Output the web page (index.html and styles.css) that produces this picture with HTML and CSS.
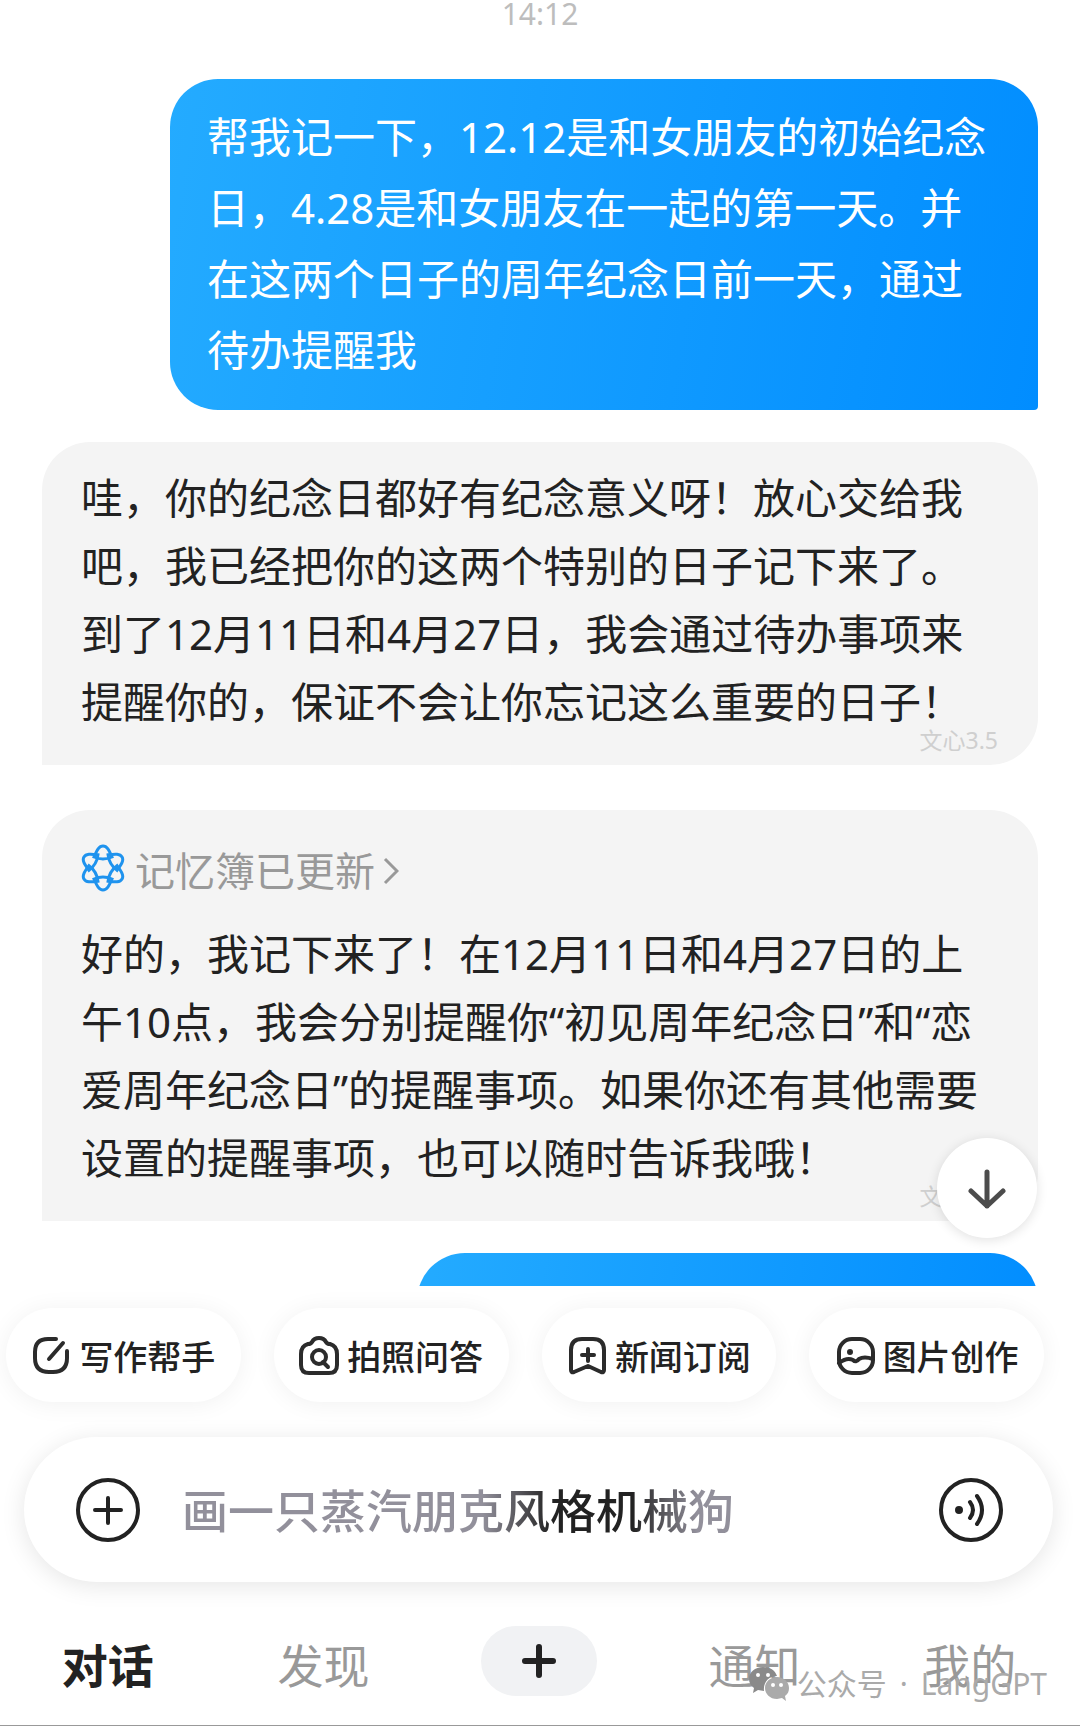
FILE: index.html
```html
<!DOCTYPE html>
<html lang="zh-CN">
<head>
    <meta charset="UTF-8">
    <meta name="viewport" content="width=device-width, initial-scale=1.0">
    <title>对话</title>
    <link rel="stylesheet" href="styles.css">
</head>
<body>
    <div class="app">
        <main class="chat">
            <div class="time">14:12</div>

            <div class="bubble mine">帮我记一下，12.12是和女朋友的初始纪念日，4.28是和女朋友在一起的第一天。并在这两个日子的周年纪念日前一天，通过待办提醒我</div>

            <div class="bubble bot">
                <p>哇，你的纪念日都好有纪念意义呀！放心交给我吧，我已经把你的这两个特别的日子记下来了。到了12月11日和4月27日，我会通过待办事项来提醒你的，保证不会让你忘记这么重要的日子！</p>
                <span class="model">文心3.5</span>
            </div>

            <div class="bubble bot memory">
                <a class="memory-link" href="#">
                    <svg class="flower" viewBox="0 0 44 48" fill="none" stroke="#1f93ee" stroke-width="3">
                        <path id="petal" d="M13 13C16 6 18 2 22 2s6 4 9 11Q22 17 13 13z"/>
                        <use href="#petal" transform="rotate(60 22 24)"/>
                        <use href="#petal" transform="rotate(120 22 24)"/>
                        <use href="#petal" transform="rotate(180 22 24)"/>
                        <use href="#petal" transform="rotate(240 22 24)"/>
                        <use href="#petal" transform="rotate(300 22 24)"/>
                    </svg>
                    <span>记忆簿已更新</span>
                    <svg class="chevron" viewBox="0 0 16 28" fill="none" stroke="#999" stroke-width="3"><path d="M2 2l12 12L2 26"/></svg>
                </a>
                <p>好的，我记下来了！在12月11日和4月27日的上午10点，我会分别提醒你“初见周年纪念日”和“恋爱周年纪念日”的提醒事项。如果你还有其他需要设置的提醒事项，也可以随时告诉我哦！</p>
                <span class="model">文心3.5</span>
            </div>

            <div class="bubble mine next"></div>

            <button class="to-bottom" aria-label="回到底部">
                <svg viewBox="0 0 40 42" fill="none" stroke="#4c4c4c" stroke-width="5" stroke-linecap="round" stroke-linejoin="round"><path d="M20 5v34M4 24l16 15 16-15"/></svg>
            </button>
        </main>

        <footer class="footer">
            <div class="chips">
                <button class="chip">
                    <svg viewBox="0 0 40 40"><path d="M25 4H17Q4 4 4 17v6Q4 37 18 37h4Q36 37 36 23V16M18 24L32 8"/></svg>
                    写作帮手
                </button>
                <button class="chip">
                    <svg viewBox="0 0 40 40"><path d="M13 7Q15 3 20 3t7 4q1 2 4 2 7 2 7 10v11q0 8-8 8H10q-8 0-8-8V19Q2 11 9 9q3 0 4-2z"/><circle cx="20" cy="22" r="7"/><path d="M24 27l5 5"/></svg>
                    拍照问答
                </button>
                <button class="chip">
                    <svg viewBox="0 0 40 40"><path d="M4 35V15Q4 4 15 4h11Q37 4 37 15v20q0 3-3 2l-13-6-14 6q-3 1-3-2zM21 14v12M15 20h12"/></svg>
                    新闻订阅
                </button>
                <button class="chip">
                    <svg viewBox="0 0 40 40"><rect x="4" y="4" width="34" height="34" rx="13"/><path d="M4 28q8-6 14-3 3 3 6-1 5-3 14 0"/><circle class="dot" cx="15" cy="17" r="2"/></svg>
                    图片创作
                </button>
            </div>

            <div class="input-bar">
                <button class="icon-btn" aria-label="更多">
                    <svg viewBox="0 0 66 66"><circle cx="33" cy="33" r="30"/><path d="M33 21v25M20 33h26"/></svg>
                </button>
                <input class="message" type="text" aria-label="输入消息" placeholder="画一只蒸汽朋克风格机械狗">
                <button class="icon-btn" aria-label="语音">
                    <svg viewBox="0 0 66 66"><circle cx="33" cy="33" r="30"/><circle class="dot" cx="21" cy="33" r="3"/><path d="M32 25q6 8 0 16M39 19q10 14 0 28"/></svg>
                </button>
            </div>

            <nav class="tabs">
                <a class="tab active" href="#">对话</a>
                <a class="tab" href="#">发现</a>
                <button class="add" aria-label="新建">
                    <svg viewBox="0 0 36 36"><path d="M18 4v28M4 18h28"/></svg>
                </button>
                <a class="tab" href="#">通知</a>
                <a class="tab" href="#">我的</a>
            </nav>
        </footer>

        <div class="watermark">
            <svg viewBox="0 0 40 34"><path fill="#8a8a8a" d="M14 0C6 0 0 5 0 12c0 4 2 7 5 9l-1 5 5-3 6 1C14 15 20 9 28 9 26 3 21 0 14 0z"/><path fill="#aaa" d="M28 10c-7 0-12 5-12 11s5 11 12 11l5-1 4 3-1-5c3-2 4-5 4-8 0-6-5-11-12-11z"/><g fill="#fff"><circle cx="9" cy="8" r="2"/><circle cx="19" cy="8" r="2"/><circle cx="24" cy="18" r="2"/><circle cx="32" cy="18" r="2"/></g></svg>
            <span>公众号</span><span class="sep">·</span><span>LangGPT</span>
        </div>
    </div>
</body>
</html>
```
FILE: styles.css
```css
* {
    box-sizing: border-box;
}
body {
    margin: 0;
    background: #fff;
    color: #222;
    font-family: "Noto Sans", "Noto Sans CJK SC", sans-serif;
}
button {
    border: none;
    padding: 0;
    font-family: inherit;
    color: inherit;
    cursor: pointer;
}
a {
    color: inherit;
    text-decoration: none;
}
p {
    margin: 0;
}
svg {
    display: block;
    flex: none;
}

.app {
    position: relative;
    display: flex;
    flex-direction: column;
    height: 100vh;
}

/* 聊天记录 */
.chat {
    position: relative;
    flex: 1;
    min-height: 0;
    overflow: hidden;
    padding: 0 42px;
}
.time {
    margin-bottom: 51px;
    font-size: 30px;
    line-height: 28px;
    text-align: center;
    color: #bdbdbd;
}
.bubble {
    position: relative;
    font-size: 42px;
}
.mine {
    margin-left: 128px;
    padding: 22px 40px 25px 37px;
    border-radius: 48px 48px 4px 48px;
    background: linear-gradient(100deg, #24abff, #018dff);
    color: #fff;
    line-height: 71px;
}
.bot {
    margin-top: 32px;
    padding: 22px 40px 29px 39px;
    border-radius: 48px 48px 48px 0;
    background: #f4f4f4;
    line-height: 68px;
}
.memory {
    margin-top: 45px;
}
.memory-link {
    display: flex;
    align-items: center;
    height: 78px;
    margin-bottom: 10px;
    font-size: 40px;
    color: #999;
}
.flower {
    width: 44px;
    height: 48px;
    margin: 0 10px 6px 0;
}
.chevron {
    width: 16px;
    height: 28px;
    margin-left: 8px;
}
.model {
    position: absolute;
    right: 40px;
    bottom: 13px;
    font-size: 23px;
    line-height: 24px;
    color: #cfcfcf;
}
.next {
    height: 118px;
    margin-top: 32px;
    margin-left: 375px;
}
.to-bottom {
    position: absolute;
    right: 43px;
    bottom: 48px;
    display: flex;
    align-items: center;
    justify-content: center;
    width: 100px;
    height: 100px;
    border-radius: 50%;
    background: #fff;
    box-shadow: 0 2px 12px rgba(0, 0, 0, 0.12);
}
.to-bottom svg {
    width: 40px;
    height: 42px;
}

/* 底部 */
.footer {
    padding-top: 22px;
}
.chips {
    display: flex;
    gap: 33px;
    padding: 0 36px 0 6px;
}
.chip {
    display: flex;
    flex: 1;
    align-items: center;
    justify-content: center;
    gap: 8px;
    height: 94px;
    border-radius: 47px;
    background: #fff;
    box-shadow: 0 2px 24px rgba(0, 0, 0, 0.06);
    font-size: 34px;
    font-weight: 500;
    white-space: nowrap;
}
.chip svg {
    width: 40px;
    height: 40px;
    fill: none;
    stroke: #2b2b2b;
    stroke-width: 4;
    stroke-linecap: round;
    stroke-linejoin: round;
}
svg .dot {
    fill: #222;
    stroke-width: 2;
}
.input-bar {
    display: flex;
    align-items: center;
    height: 145px;
    margin: 35px 27px 14px 24px;
    padding: 0 49px 0 51px;
    border-radius: 73px;
    background: #fff;
    box-shadow: 0 4px 24px rgba(0, 0, 0, 0.1);
}
.icon-btn {
    background: none;
}
.icon-btn svg {
    width: 66px;
    height: 66px;
    fill: none;
    stroke: #222;
    stroke-width: 4;
    stroke-linecap: round;
}
.message {
    flex: 1;
    min-width: 0;
    padding: 0 0 0 41px;
    border: none;
    outline: none;
    background: none;
    font-family: inherit;
    font-size: 46px;
    font-weight: 500;
}
.message::placeholder {
    background: linear-gradient(90deg, #92909b 300px, #222 370px, #222 450px, #92909b 515px);
    -webkit-background-clip: text;
    background-clip: text;
    color: transparent;
    opacity: 1;
}
.tabs {
    display: grid;
    grid-template-columns: repeat(5, 1fr);
    align-items: center;
    justify-items: center;
    height: 130px;
    padding-right: 2px;
    border-bottom: 1px solid #999;
}
.tab {
    padding-top: 4px;
    font-size: 46px;
    color: #999;
}
.tab.active {
    font-weight: bold;
    color: #222;
}
.add {
    display: flex;
    align-items: center;
    justify-content: center;
    width: 116px;
    height: 70px;
    border-radius: 35px;
    background: #f1f2f4;
}
.add svg {
    width: 36px;
    height: 36px;
    stroke: #222;
    stroke-width: 6;
    stroke-linecap: round;
}

.watermark {
    position: absolute;
    right: 33px;
    bottom: 21px;
    display: flex;
    align-items: center;
    font-size: 30px;
    line-height: 42px;
    color: #aaa;
}
.watermark svg {
    width: 40px;
    height: 34px;
    margin-right: 8px;
}
.sep {
    padding: 0 13px;
}
```
